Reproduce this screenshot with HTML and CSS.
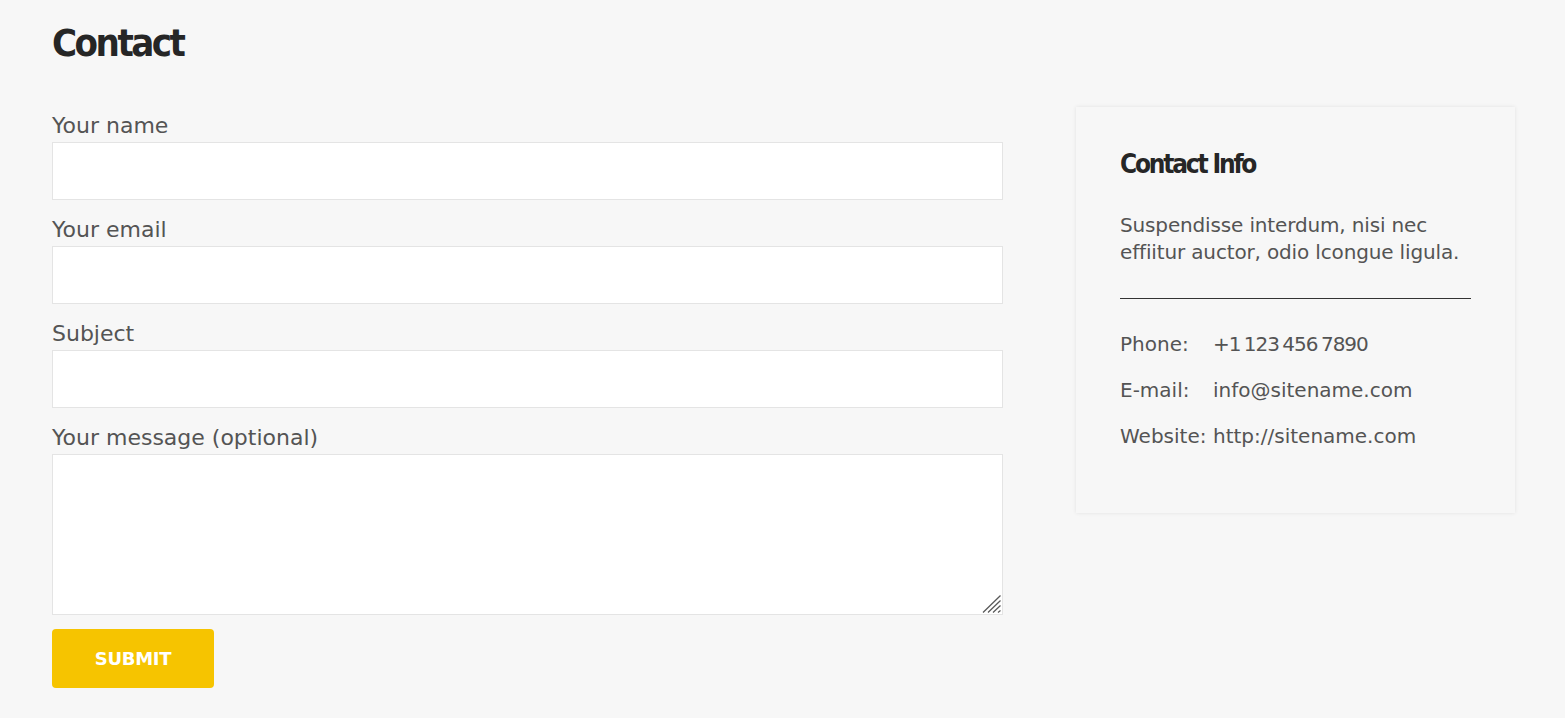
FILE: index.html
```html
<!DOCTYPE html>
<html lang="en">
<head>
<meta charset="utf-8">
<title>Contact</title>
<link rel="stylesheet" href="styles.css">
</head>
<body>
<main class="page">
  <h1 class="title">Contact</h1>
  <div class="content">
    <form class="form">
      <div class="field">
        <label class="label" for="name">Your name</label>
        <input class="input" id="name" type="text">
      </div>
      <div class="field">
        <label class="label" for="email">Your email</label>
        <input class="input" id="email" type="email">
      </div>
      <div class="field">
        <label class="label" for="subject">Subject</label>
        <input class="input" id="subject" type="text">
      </div>
      <div class="field field-last">
        <label class="label" for="message">Your message (optional)</label>
        <div class="textarea-wrap">
          <textarea class="textarea" id="message"></textarea>
          <svg class="grip" width="19" height="18" viewBox="0 0 19 18" aria-hidden="true">
            <path d="M1 17.5 L18.5 0.5 M6 17.5 L18.5 5.5 M11 17.5 L18.5 10.5 M16 17.5 L18.5 15.5" stroke="#5a5a5a" stroke-width="1.3" fill="none"/>
          </svg>
        </div>
      </div>
      <button class="submit" type="button">SUBMIT</button>
    </form>
    <aside class="card">
      <h2 class="card-title">Contact Info</h2>
      <p class="card-text">Suspendisse interdum, nisi nec effiitur auctor, odio lcongue ligula.</p>
      <hr class="divider">
      <dl class="info">
        <dt class="info-key">Phone:</dt><dd class="info-val info-phone">+1 123 456 7890</dd>
        <dt class="info-key">E-mail:</dt><dd class="info-val">info@sitename.com</dd>
        <dt class="info-key">Website:</dt><dd class="info-val">http://sitename.com</dd>
      </dl>
    </aside>
  </div>
</main>
</body>
</html>
```
FILE: styles.css
```css
* { box-sizing: border-box; }
html, body { margin: 0; padding: 0; }
body {
  background: #f7f7f7;
  font-family: "DejaVu Sans", "Open Sans", sans-serif;
  color: #545454;
  font-size: 20px;
}
.page {
  padding: 19px 50px 0 52px;
}
.title {
  margin: 0;
  font-family: "DejaVu Sans Condensed", "DejaVu Sans", sans-serif;
  font-weight: 700;
  font-size: 38px;
  line-height: 48px;
  letter-spacing: -2.5px;
  color: #262626;
}
.content {
  display: flex;
  justify-content: space-between;
  align-items: flex-start;
  margin-top: 40px;
}
.form {
  width: 951px;
  padding-top: 5px;
  display: flex;
  flex-direction: column;
}
.field {
  display: flex;
  flex-direction: column;
  margin-bottom: 16px;
}
.field-last { margin-bottom: 14px; }
.label {
  font-size: 22px;
  line-height: 27px;
  margin-bottom: 3px;
  color: #545454;
}
.input, .textarea {
  display: block;
  width: 100%;
  margin: 0;
  background: #fff;
  border: 1px solid #e4e4e4;
  border-radius: 0;
  font: inherit;
  outline: none;
}
.input { height: 58px; }
.textarea-wrap { position: relative; }
.textarea { height: 161px; resize: none; }
.grip {
  position: absolute;
  right: 2px;
  bottom: 2px;
  display: block;
}
.submit {
  width: 162px;
  height: 59px;
  border: 0;
  border-radius: 4px;
  background: #f6c400;
  color: #fff;
  font-family: "DejaVu Sans", sans-serif;
  font-weight: 700;
  font-size: 18px;
  letter-spacing: -0.3px;
  padding: 0;
  cursor: pointer;
}
.card {
  width: 439px;
  padding: 41px 44px 63px;
  background: #f7f7f7;
  box-shadow: 0 0 4px rgba(0, 0, 0, 0.09);
}
.card-title {
  margin: 0;
  font-family: "DejaVu Sans Condensed", "DejaVu Sans", sans-serif;
  font-weight: 700;
  font-size: 26px;
  line-height: 32px;
  letter-spacing: -2.2px;
  color: #262626;
}
.card-text {
  margin: 32px 0 0;
  font-size: 20px;
  line-height: 27px;
  letter-spacing: -0.15px;
}
.divider {
  margin: 32px 0 0;
  border: 0;
  border-top: 1px solid #333;
}
.info {
  margin: 32px 0 0;
  display: grid;
  grid-template-columns: 93px 1fr;
  row-gap: 19px;
  font-size: 20px;
  line-height: 27px;
}
.info-key, .info-val { margin: 0; }
.info-phone { letter-spacing: -1px; word-spacing: -2px; }
```
